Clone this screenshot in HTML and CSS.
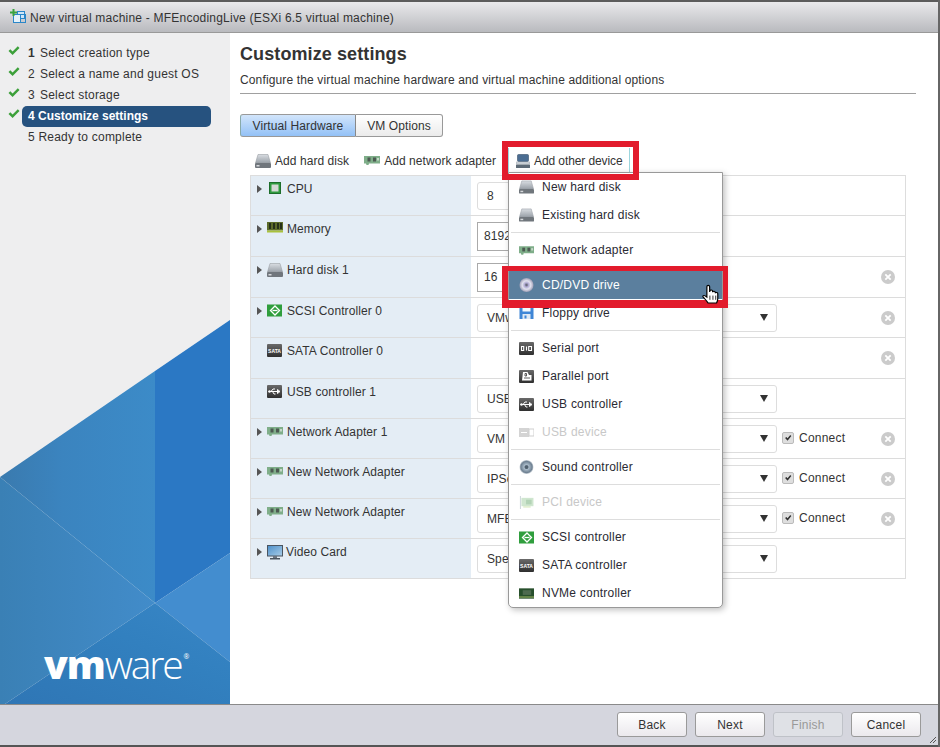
FILE: index.html
```html
<!DOCTYPE html>
<html lang="en">

<head>
    <meta charset="UTF-8" />
    <meta name="viewport" content="width=device-width, initial-scale=1.0" />
    <title>New virtual machine</title>
    <link rel="stylesheet" href="styles.css">
</head>

<body>
    <!-- icon sheet -->
    <svg class="defs" aria-hidden="true">
        <defs>
            <linearGradient id="diskTop" x1="0" y1="0" x2="0" y2="1">
                <stop offset="0" stop-color="#d9dde2" />
                <stop offset="1" stop-color="#9aa1a8" />
            </linearGradient>
            <linearGradient id="darkBox" x1="0" y1="0" x2="0" y2="1">
                <stop offset="0" stop-color="#6a6a6a" />
                <stop offset="1" stop-color="#2f2f2f" />
            </linearGradient>
            <linearGradient id="screen" x1="0" y1="0" x2="1" y2="1">
                <stop offset="0" stop-color="#4c8fc9" />
                <stop offset="1" stop-color="#a9cde8" />
            </linearGradient>
            <radialGradient id="disc">
                <stop offset="0" stop-color="#ffffff" />
                <stop offset="0.25" stop-color="#a9a3cf" />
                <stop offset="0.6" stop-color="#e2e2ee" />
                <stop offset="1" stop-color="#9d9db5" />
            </radialGradient>
            <radialGradient id="cone">
                <stop offset="0" stop-color="#50606e" />
                <stop offset="0.35" stop-color="#a9bac8" />
                <stop offset="0.8" stop-color="#6f8192" />
                <stop offset="1" stop-color="#cfd6dc" />
            </radialGradient>
        </defs>
        <symbol id="i-disk" viewBox="0 0 16 14">
            <path d="M3 0.500h10l2.500 8.500h-15z" fill="url(#diskTop)" stroke="#9a9fa5" stroke-width=".6" />
            <rect x="0" y="9" width="16" height="5" rx="1" fill="#70767c" />
            <rect x="1.500" y="11" width="3" height="1.500" fill="#d5d8db" />
        </symbol>
        <symbol id="i-other" viewBox="0 0 14 14">
            <rect x="1.500" y="0.500" width="11" height="7" rx="1" fill="#4b6d92" stroke="#39506a" stroke-width=".6" />
            <rect x="0" y="8" width="14" height="2" fill="#d8dde3" stroke="#8c949c" stroke-width=".4" />
            <rect x="0" y="10.500" width="14" height="3.500" rx=".6" fill="#5d6a76" />
        </symbol>
        <symbol id="i-nic" viewBox="0 0 16 9">
            <path d="M0 0h16v7.500h-11l-.5 1.500h-2l-.5-1.500h-2z" fill="#7fae89" />
            <rect x="3.500" y="1.500" width="3" height="4" fill="#4d5a52" />
            <rect x="9" y="1.500" width="3" height="4" fill="#4d5a52" />
            <rect x="13" y="2" width="2" height="2.500" fill="#c7d8ca" />
        </symbol>
        <symbol id="i-cpu" viewBox="0 0 12 12">
            <rect x="0.500" y="0.500" width="11" height="11" fill="#2f9a3f" stroke="#1d6e2b" />
            <rect x="2.500" y="2.500" width="7" height="7" fill="#d5d9d5" />
        </symbol>
        <symbol id="i-mem" viewBox="0 0 16 11">
            <rect x="0" y="0" width="16" height="8.500" fill="#5c6b2a" />
            <path d="M2 1h2v6h-2zM6 1h2v6h-2zM10 1h2v6h-2zM13 1h2v6h-2z" fill="#26301a" />
            <rect x="0" y="8.500" width="16" height="2" fill="#a9c23c" />
        </symbol>
        <symbol id="i-scsi" viewBox="0 0 15 12">
            <rect width="15" height="12" fill="#2f9e3d" />
            <path d="M8 1.500l4.500 4.500-4.500 4.500-4.500-4.500z" fill="none" stroke="#fff" stroke-width="1.300" />
            <path d="M5.500 6h5" stroke="#fff" stroke-width="1.300" />
        </symbol>
        <symbol id="i-usb" viewBox="0 0 15 13">
            <rect width="15" height="13" rx="1" fill="url(#darkBox)" />
            <path d="M1.500 6.500h11M10.500 4.500l2.500 2-2.500 2zM4 6.500l2-2.500h2M5.500 6.500l1.500 2.500h1.500" fill="none" stroke="#fff" stroke-width="1" />
            <circle cx="2.500" cy="6.500" r="1.200" fill="#fff" />
        </symbol>
        <symbol id="i-usbdev" viewBox="0 0 15 9">
            <rect x="0" y="0" width="10" height="9" fill="#d4d4d4" />
            <rect x="10" y="1" width="5" height="7" fill="none" stroke="#cfcfcf" />
            <path d="M2 4.500h6" stroke="#fff" />
        </symbol>
        <symbol id="i-screen" viewBox="0 0 16 15">
            <rect x="0.500" y="0.500" width="15" height="10.500" fill="url(#screen)" stroke="#4a5561" />
            <rect x="6" y="11" width="4" height="2" fill="#6b7480" />
            <rect x="3" y="13" width="10" height="1.500" fill="#4b5560" />
        </symbol>
        <symbol id="i-cd" viewBox="0 0 16 16">
            <circle cx="8" cy="8" r="7.500" fill="url(#disc)" />
            <circle cx="8" cy="8" r="1.500" fill="#6c6c80" />
        </symbol>
        <symbol id="i-floppy" viewBox="0 0 14 12">
            <rect width="14" height="12" fill="#3f86d6" />
            <rect x="3" y="0" width="8" height="4.500" fill="#f4f8fc" />
            <rect x="3" y="7" width="8" height="5" fill="#dfe9f4" />
            <rect x="5" y="8.500" width="2" height="3" fill="#3f86d6" />
        </symbol>
        <symbol id="i-serial" viewBox="0 0 15 13">
            <rect width="15" height="13" rx="1" fill="url(#darkBox)" />
            <path d="M4.700 4.500h-2.200v4h2.200zM7.500 4.500v4M12.500 4.500h-2.800v4h2.800z" fill="none" stroke="#fff" stroke-width="1.100" />
        </symbol>
        <symbol id="i-parallel" viewBox="0 0 15 13">
            <rect width="15" height="13" rx="1" fill="url(#darkBox)" />
            <path d="M4 2h4.500l1.500 3h2.500v5.500h-9.500z" fill="#fff" />
            <path d="M6 3.500h1.500v2.500h-1.500zM5 8h6" fill="none" stroke="#333" stroke-width=".8" />
        </symbol>
        <symbol id="i-sound" viewBox="0 0 16 16">
            <circle cx="8" cy="8" r="7.500" fill="url(#cone)" />
            <circle cx="8" cy="8" r="2" fill="#50606e" />
        </symbol>
        <symbol id="i-pci" viewBox="0 0 15 14">
            <path d="M1 0v14" stroke="#d2dade" stroke-width="1.200" />
            <rect x="2" y="2" width="13" height="9" fill="#cfe6cf" />
            <rect x="7" y="4" width="6" height="5" fill="#b3d3b6" />
            <rect x="4" y="11" width="8" height="1.500" fill="#dcecc8" />
        </symbol>
        <symbol id="i-nvme" viewBox="0 0 16 11">
            <path d="M0 0h16v11h-16z" fill="#274f2c" />
            <rect x="4" y="2" width="9" height="5" fill="#4d6a4f" />
            <rect x="0" y="8.500" width="16" height="1.500" fill="#7d9a55" />
        </symbol>
        <symbol id="i-check" viewBox="0 0 12 10">
            <path d="M0.500 5l1.800-1.700 2.300 2.300 5.200-5.300 1.700 1.700-6.900 7z" fill="#3ca03a" />
        </symbol>
        <symbol id="i-remove" viewBox="0 0 14 14">
            <circle cx="7" cy="7" r="7" fill="#cbcbcb" />
            <path d="M4.300 4.300l5.400 5.400M9.700 4.300l-5.400 5.400" stroke="#fff" stroke-width="1.800" />
        </symbol>
        <symbol id="i-tick" viewBox="0 0 12 12">
            <path d="M2.500 6l1.500-1.300 1.500 1.600 3.200-3.800 1.300 1.200-4.500 5.600z" fill="#333" />
        </symbol>
    </svg>

    <div class="window">
        <div class="titlebar">
            <svg class="title-icon" viewBox="0 0 16 15">
                <rect x="7.500" y="2.500" width="7" height="7" fill="#cfe6f7" stroke="#2a87c9" />
                <rect x="3.500" y="5.500" width="7" height="8" fill="#e5f2fb" stroke="#2a87c9" />
                <rect x="10.500" y="5.500" width="5" height="8" fill="none" stroke="#2a87c9" />
                <path d="M3.500 0v7M0 3.500h7" stroke="#3aa33f" stroke-width="2" />
            </svg>
            <span>New virtual machine - MFEncodingLive (ESXi 6.5 virtual machine)</span>
        </div>

        <div class="content">
            <div class="sidebar">
                <svg class="art" viewBox="0 0 230 384" preserveAspectRatio="none">
                    <defs>
                        <linearGradient id="artLeft" x1="0" y1="0" x2="1" y2="0">
                            <stop offset="0" stop-color="#3a80b5" />
                            <stop offset="1" stop-color="#428cca" />
                        </linearGradient>
                        <linearGradient id="artTop" x1="0" y1="0" x2="1" y2="0">
                            <stop offset="0" stop-color="#3a7aae" />
                            <stop offset="0.4" stop-color="#3b84bf" />
                            <stop offset="1" stop-color="#3c8bc8" />
                        </linearGradient>
                        <linearGradient id="artBottom" x1="0" y1="1" x2="1" y2="0">
                            <stop offset="0" stop-color="#2f76b5" />
                            <stop offset="0.6" stop-color="#3280bf" />
                            <stop offset="1" stop-color="#3886c6" />
                        </linearGradient>
                    </defs>
                    <polygon points="0,157 155,283 5,384 0,384" fill="url(#artLeft)" />
                    <polygon points="0,157 155,51 155,283" fill="url(#artTop)" />
                    <polygon points="155,51 230,0 230,233 155,283" fill="#2b78c4" />
                    <polygon points="155,283 230,233 230,342" fill="#438dcf" />
                    <polygon points="155,283 230,342 230,384 5,384" fill="url(#artBottom)" />
                </svg>
                <div class="steps">
                    <div class="step"><svg class="step-check"><use href="#i-check" /></svg><div class="step-label"><b class="num">1</b>Select creation type</div></div>
                    <div class="step"><svg class="step-check"><use href="#i-check" /></svg><div class="step-label"><span class="num">2</span>Select a name and guest OS</div></div>
                    <div class="step"><svg class="step-check"><use href="#i-check" /></svg><div class="step-label"><span class="num">3</span>Select storage</div></div>
                    <div class="step"><svg class="step-check"><use href="#i-check" /></svg><div class="step-label step-active">4 Customize settings</div></div>
                    <div class="step"><span class="step-check"></span><div class="step-label">5 Ready to complete</div></div>
                </div>
                <div class="logo"><b>vm</b>ware<sup>®</sup></div>
            </div>

            <div class="main">
                <h1>Customize settings</h1>
                <p class="desc">Configure the virtual machine hardware and virtual machine additional options</p>

                <div class="tabs">
                    <div class="tab tab-on">Virtual Hardware</div>
                    <div class="tab">VM Options</div>
                </div>

                <div class="toolbar">
                    <div class="tool tool-disk"><svg class="ic"><use href="#i-disk" /></svg>Add hard disk</div>
                    <div class="tool"><svg class="ic ic-nic"><use href="#i-nic" /></svg>Add network adapter</div>
                    <div class="tool tool-open"><svg class="ic ic-other"><use href="#i-other" /></svg>Add other device</div>
                </div>

                <div class="hw">
                    <div class="hw-row">
                        <div class="hw-name"><i class="arrow"></i><svg class="ic ic-cpu"><use href="#i-cpu" /></svg>CPU</div>
                        <div class="hw-val"><div class="field">8</div></div>
                    </div>
                    <div class="hw-row tall">
                        <div class="hw-name"><i class="arrow"></i><svg class="ic ic-mem"><use href="#i-mem" /></svg>Memory</div>
                        <div class="hw-val"><div class="field field-num">8192</div></div>
                    </div>
                    <div class="hw-row tall">
                        <div class="hw-name"><i class="arrow"></i><svg class="ic"><use href="#i-disk" /></svg>Hard disk 1</div>
                        <div class="hw-val"><div class="field field-num">16</div><svg class="remove"><use href="#i-remove" /></svg></div>
                    </div>
                    <div class="hw-row">
                        <div class="hw-name"><i class="arrow"></i><svg class="ic ic-small"><use href="#i-scsi" /></svg>SCSI Controller 0</div>
                        <div class="hw-val"><div class="field select">VMw</div><svg class="remove"><use href="#i-remove" /></svg></div>
                    </div>
                    <div class="hw-row tall">
                        <div class="hw-name"><i class="arrow arrow-none"></i><svg class="ic ic-small" viewBox="0 0 15 13"><rect width="15" height="13" rx="1" fill="url(#darkBox)" /><text x="7.500" y="8.800" text-anchor="middle" class="icon-text">SATA</text></svg>SATA Controller 0</div>
                        <div class="hw-val"><svg class="remove"><use href="#i-remove" /></svg></div>
                    </div>
                    <div class="hw-row">
                        <div class="hw-name"><i class="arrow arrow-none"></i><svg class="ic ic-small"><use href="#i-usb" /></svg>USB controller 1</div>
                        <div class="hw-val"><div class="field select">USB</div></div>
                    </div>
                    <div class="hw-row">
                        <div class="hw-name"><i class="arrow"></i><svg class="ic ic-nic"><use href="#i-nic" /></svg>Network Adapter 1</div>
                        <div class="hw-val"><div class="field select">VM N</div><label class="connect"><svg class="cb"><use href="#i-tick" /></svg>Connect</label><svg class="remove"><use href="#i-remove" /></svg></div>
                    </div>
                    <div class="hw-row">
                        <div class="hw-name"><i class="arrow"></i><svg class="ic ic-nic"><use href="#i-nic" /></svg>New Network Adapter</div>
                        <div class="hw-val"><div class="field select">IPSe</div><label class="connect"><svg class="cb"><use href="#i-tick" /></svg>Connect</label><svg class="remove"><use href="#i-remove" /></svg></div>
                    </div>
                    <div class="hw-row">
                        <div class="hw-name"><i class="arrow"></i><svg class="ic ic-nic"><use href="#i-nic" /></svg>New Network Adapter</div>
                        <div class="hw-val"><div class="field select">MFE</div><label class="connect"><svg class="cb"><use href="#i-tick" /></svg>Connect</label><svg class="remove"><use href="#i-remove" /></svg></div>
                    </div>
                    <div class="hw-row">
                        <div class="hw-name"><i class="arrow"></i><svg class="ic ic-screen"><use href="#i-screen" /></svg>Video Card</div>
                        <div class="hw-val"><div class="field select">Spe</div></div>
                    </div>
                </div>

                <!-- open menu and the red marks drawn over the screenshot -->
                <div class="menu">
                    <div class="item"><svg class="ic"><use href="#i-disk" /></svg>New hard disk</div>
                    <div class="item"><svg class="ic"><use href="#i-disk" /></svg>Existing hard disk</div>
                    <div class="sep"></div>
                    <div class="item"><svg class="ic ic-nic"><use href="#i-nic" /></svg>Network adapter</div>
                    <div class="sep"></div>
                    <div class="item item-hover"><svg class="ic ic-round"><use href="#i-cd" /></svg>CD/DVD drive</div>
                    <div class="item"><svg class="ic ic-floppy"><use href="#i-floppy" /></svg>Floppy drive</div>
                    <div class="sep"></div>
                    <div class="item"><svg class="ic ic-small"><use href="#i-serial" /></svg>Serial port</div>
                    <div class="item"><svg class="ic ic-small"><use href="#i-parallel" /></svg>Parallel port</div>
                    <div class="item"><svg class="ic ic-small"><use href="#i-usb" /></svg>USB controller</div>
                    <div class="item item-off"><svg class="ic ic-usbdev"><use href="#i-usbdev" /></svg>USB device</div>
                    <div class="sep"></div>
                    <div class="item"><svg class="ic ic-round"><use href="#i-sound" /></svg>Sound controller</div>
                    <div class="sep"></div>
                    <div class="item item-off"><svg class="ic ic-small"><use href="#i-pci" /></svg>PCI device</div>
                    <div class="sep"></div>
                    <div class="item"><svg class="ic ic-small"><use href="#i-scsi" /></svg>SCSI controller</div>
                    <div class="item"><svg class="ic ic-small" viewBox="0 0 15 13"><rect width="15" height="13" rx="1" fill="url(#darkBox)" /><text x="7.500" y="8.800" text-anchor="middle" class="icon-text">SATA</text></svg>SATA controller</div>
                    <div class="item"><svg class="ic ic-nvme"><use href="#i-nvme" /></svg>NVMe controller</div>
                </div>
                <div class="mark mark-add"></div>
                <div class="mark mark-cd"></div>
                <svg class="hand" viewBox="0 0 14 19" preserveAspectRatio="none">
                    <path d="M5 18c-1-2-2.500-3.500-4-5.500-.7-1 .5-2.200 1.600-1.300l1.400 1.300v-10c0-1.600 2.300-1.600 2.300 0v5l.2-1c.3-1.200 2.100-1 2.200.2l.1 1c.3-1.100 2-1 2.100.2l.1.800c.4-1 2-.7 2 .5v4.500c0 1.500-.5 3-1 4.300z" fill="#fff" stroke="#000" stroke-width="1" />
                    <path d="M6.500 11v4M9 11v4M11.300 11v4" stroke="#000" stroke-width=".7" />
                </svg>
            </div>
        </div>

        <div class="footer">
            <button class="btn">Back</button>
            <button class="btn">Next</button>
            <button class="btn btn-off">Finish</button>
            <button class="btn">Cancel</button>
            <svg class="grip" viewBox="0 0 8 8"><path d="M7 1l-6 6M7 4l-3 3" stroke="#555" stroke-width="1" /></svg>
        </div>
    </div>
</body>

</html>
```

FILE: styles.css
```css
* {
    box-sizing: border-box;
}

body {
    margin: 0;
    overflow: hidden;
    background: #fff;
    color: #333;
    font-family: "Liberation Sans", Arial, sans-serif;
    font-size: 12px;
    letter-spacing: 0.22px;
}

.defs {
    position: absolute;
    width: 0;
    height: 0;
}

.icon-text {
    font-family: "Liberation Sans", Arial, sans-serif;
    font-size: 5px;
    font-weight: bold;
    letter-spacing: 0;
    fill: #fff;
}

.window {
    width: 940px;
    height: 747px;
    display: flex;
    flex-direction: column;
    border-right: 2px solid #666;
}

.titlebar {
    height: 33px;
    display: flex;
    align-items: center;
    gap: 4px;
    padding: 2px 0 0 10px;
    border-top: 2px solid #5c5c5c;
    border-bottom: 1px solid #999;
    background: linear-gradient(#e9e9eb, #b9babe);
    color: #333;
}

.title-icon {
    width: 16px;
    height: 15px;
    margin-top: -3px;
}

.content {
    flex: 1;
    display: flex;
    min-height: 0;
}

/* left column */
.sidebar {
    width: 230px;
    position: relative;
    background: #eeeeef;
}

.art {
    position: absolute;
    left: 0;
    top: 287px;
    width: 230px;
    height: 384px;
}

.steps {
    position: relative;
    padding-top: 9px;
}

.step {
    height: 21px;
    display: flex;
    align-items: center;
    color: #333;
}

.step-check {
    width: 12px;
    height: 10px;
    margin: -3px 2px 0 8px;
}

.step-label {
    width: 189px;
    height: 21px;
    line-height: 22px;
    padding-left: 6px;
}

.num {
    display: inline-block;
    width: 12px;
}

.step-active {
    margin-top: 2px;
    line-height: 20px;
    background: #26527f;
    border-radius: 5px;
    color: #fff;
    font-weight: bold;
    letter-spacing: 0;
}

.logo {
    position: absolute;
    left: 44px;
    top: 608px;
    color: #fff;
    font-family: "Open Sans", sans-serif;
    font-size: 39px;
    font-weight: 300;
    line-height: 46px;
    letter-spacing: -2.2px;
}

.logo b {
    font-weight: 800;
    letter-spacing: -1px;
}

.logo sup {
    font-size: 7px;
    font-weight: 400;
    letter-spacing: 0;
    line-height: 0;
    vertical-align: 20px;
    margin-left: 2px;
}

/* right column */
.main {
    flex: 1;
    position: relative;
    padding: 10px 22px 0 10px;
}

h1 {
    margin: 0;
    font-size: 18px;
    line-height: 22px;
    letter-spacing: 0.1px;
    font-weight: bold;
    color: #333;
}

.desc {
    margin: 7px 0 0;
    line-height: 16px;
    padding-bottom: 5px;
    border-bottom: 1px solid #a0a0a0;
    letter-spacing: 0.14px;
}

.tabs {
    display: flex;
    margin-top: 20px;
    height: 23px;
    letter-spacing: 0.1px;
}

.tab {
    width: 87px;
    display: flex;
    align-items: center;
    justify-content: center;
    border: 1px solid #999;
    border-left: 0;
    border-radius: 0 3px 3px 0;
    background: linear-gradient(#fff, #ebebeb);
}

.tab-on {
    width: 116px;
    border-left: 1px solid #8aa;
    border-right: 1px solid #888;
    border-radius: 3px 0 0 3px;
    background: linear-gradient(#d2e5fb, #93c1f6);
}

.toolbar {
    display: flex;
    align-items: center;
    height: 24px;
    margin: 11px 0 3px 15px;
    letter-spacing: 0.06px;
}

.tool {
    display: flex;
    align-items: center;
    margin-right: 13px;
    padding-top: 1px;
    height: 24px;
    white-space: nowrap;
}

.tool-disk {
    margin-right: 15px;
}

.tool-open {
    margin-left: -1px;
    padding: 1px 6px 0 7px;
    border-left: 1px solid #9cd6de;
    border-right: 1px solid #9cd6de;
    background: #fff;
    letter-spacing: -0.1px;
}

.ic {
    width: 16px;
    height: 14px;
    margin-right: 4px;
    flex: none;
}

.ic-nic {
    height: 9px;
}

.ic-other {
    width: 14px;
    margin-right: 4px;
}

.ic-cpu {
    width: 12px;
    height: 12px;
    margin: 0 6px 0 2px;
}

.ic-mem {
    height: 11px;
}

.ic-small {
    width: 15px;
    height: 13px;
    margin-right: 5px;
}

.ic-screen {
    height: 15px;
    margin-right: 3px;
}

.ic-round {
    width: 16px;
    height: 16px;
}

.ic-floppy {
    width: 14px;
    height: 12px;
    margin-right: 6px;
}

.ic-usbdev {
    height: 9px;
}

.ic-nvme {
    height: 11px;
}

/* hardware table */
.hw {
    margin-left: 10px;
    width: 656px;
    border: 1px solid #ddd;
    border-bottom: 0;
    letter-spacing: 0.1px;
}

.hw-row {
    height: 40px;
    display: grid;
    grid-template-columns: 220px 1fr;
    border-bottom: 1px solid #dcdcdc;
}

.hw-row.tall {
    height: 41px;
}

.hw-name {
    display: flex;
    align-items: flex-start;
    padding: 5px 0 0 6px;
    line-height: 16px;
    background: #e4edf5;
    white-space: nowrap;
}

.hw-name .ic {
    margin-top: 1px;
}

.hw-name .ic-nic {
    margin-top: 3px;
}

.arrow {
    width: 0;
    height: 0;
    flex: none;
    margin: 4px 5px 0 0;
    border-left: 5px solid #555;
    border-top: 4px solid transparent;
    border-bottom: 4px solid transparent;
}

.arrow-none {
    border-left-color: transparent;
}

.hw-val {
    display: flex;
    align-items: center;
    padding: 0 10px 0 6px;
}

.field {
    width: 110px;
    height: 28px;
    display: flex;
    align-items: center;
    padding-left: 9px;
    border: 1px solid #ddd;
    border-radius: 3px;
    white-space: nowrap;
}

.field-num {
    height: 29px;
    padding-left: 6px;
    border-color: #aaa;
    border-radius: 0;
}

.select {
    width: 300px;
    position: relative;
}

.select::after {
    content: "";
    position: absolute;
    right: 8px;
    top: 9px;
    border-top: 7px solid #333;
    border-left: 4px solid transparent;
    border-right: 4px solid transparent;
}

.connect {
    display: flex;
    align-items: center;
    margin: -2px 0 0 5px;
    gap: 5px;
    letter-spacing: 0.22px;
}

.cb {
    width: 12px;
    height: 12px;
    background: #dedede;
    border: 1px solid #bbb;
    border-radius: 2px;
}

.remove {
    width: 14px;
    height: 14px;
    margin-left: auto;
}

/* add other device menu */
.menu {
    position: absolute;
    left: 278px;
    top: 139px;
    width: 215px;
    background: #fff;
    border: 1px solid #999;
    border-radius: 0 0 5px 5px;
    box-shadow: 2px 2px 6px rgba(0, 0, 0, 0.25);
    color: #2a2a33;
    z-index: 10;
}

.item {
    height: 28px;
    display: flex;
    align-items: center;
    padding-left: 10px;
}

.item .ic {
    width: 15px;
    margin-right: 8px;
}

.item-hover {
    background: #5b7f9e;
    color: #fff;
}

.item-off {
    color: #c8c8c8;
}

.sep {
    height: 1px;
    margin: 3px 2px;
    background: #ddd;
}

.mark {
    position: absolute;
    border-style: solid;
    border-color: #e21b2c;
    z-index: 20;
}

.mark-add {
    left: 272px;
    top: 108px;
    width: 137px;
    height: 39px;
    border-width: 6px;
}

.mark-cd {
    left: 272px;
    top: 233px;
    width: 226px;
    height: 42px;
    border-width: 5px 5px 8px 6px;
}

.hand {
    position: absolute;
    left: 472px;
    top: 251px;
    width: 17px;
    height: 20px;
    z-index: 30;
}

/* bottom bar */
.footer {
    height: 43px;
    position: relative;
    display: flex;
    justify-content: flex-end;
    gap: 8px;
    padding: 7px 17px 0 0;
    background: #d5d6de;
    border-top: 1px solid #8a8a8a;
    border-bottom: 2px solid #555;
}

.btn {
    width: 70px;
    height: 25px;
    padding: 0;
    font: inherit;
    letter-spacing: inherit;
    color: #333;
    border: 1px solid #9a9a9a;
    border-radius: 3px;
    background: linear-gradient(#fff, #ebe9ed);
}

.btn-off {
    color: #999;
    border-color: #bfc2c8;
    background: #dfe1e6;
}

.grip {
    position: absolute;
    right: 1px;
    bottom: 1px;
    width: 8px;
    height: 8px;
}
```
